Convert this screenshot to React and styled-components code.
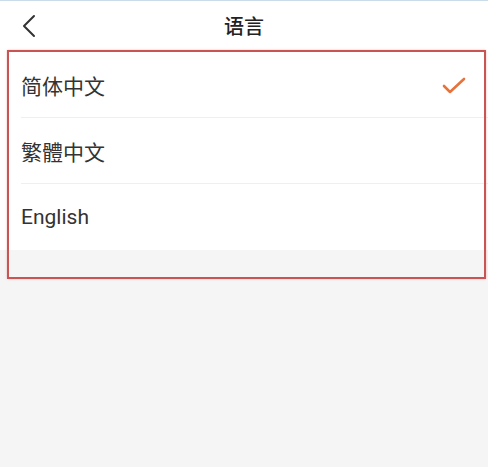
import React from "react";
import styled, { createGlobalStyle } from "styled-components";

const Global = createGlobalStyle`
  html, body { margin: 0; padding: 0; background: #f5f5f5; }
  body { font-family: Roboto, "Noto Sans CJK SC", "Noto Sans", sans-serif; }
`;

const Page = styled.div`
  position: relative;
  width: 488px;
  height: 467px;
  background: #f5f5f5;
  overflow: hidden;
`;

const Header = styled.header`
  height: 51px;
  border-top: 1px solid #c9dce8;
  background: #fff;
  display: grid;
  grid-template-columns: 60px 1fr 60px;
  align-items: center;
`;

const Back = styled.button`
  border: 0;
  background: none;
  padding: 0 0 0 22px;
  display: flex;
  align-items: center;
  height: 100%;
  margin-top: -2px;
`;

const Title = styled.h1`
  margin: 0;
  text-align: center;
  font-size: 20px;
  font-weight: 500;
  color: #222;
  margin-top: -2px;
`;

const List = styled.ul`
  list-style: none;
  margin: 0;
  padding: 0;
  background: #fff;
`;

const Row = styled.li`
  height: 66px;
  margin-left: 21px;
  padding-right: 22px;
  display: flex;
  align-items: center;
  justify-content: space-between;
  border-bottom: ${(p) => (p.$last ? "none" : "1px solid #efefef")};
  box-sizing: border-box;
  font-size: 21px;
  color: #333;
`;

const Annotation = styled.div`
  position: absolute;
  left: 7px;
  top: 50px;
  width: 479px;
  height: 229px;
  box-sizing: border-box;
  border: 2px solid #c95454;
  box-shadow: 0 0 2px rgba(230, 120, 120, 0.5);
  pointer-events: none;
`;

const Check = () => (
  <svg width="24" height="18" viewBox="0 0 24 18" style={{ marginTop: 2 }}>
    <polyline
      points="2,9 8,15 22,2"
      fill="none"
      stroke="#e8733a"
      strokeWidth="2.6"
      strokeLinecap="round"
      strokeLinejoin="round"
    />
  </svg>
);

const langs = [
  { label: "简体中文", selected: true },
  { label: "繁體中文" },
  { label: "English" },
];

export default function App() {
  return (
    <Page>
      <Global />
      <Header>
        <Back aria-label="back">
          <svg width="14" height="24" viewBox="0 0 14 24">
            <polyline
              points="12,2 2,12 12,22"
              fill="none"
              stroke="#333"
              strokeWidth="2"
              strokeLinecap="round"
              strokeLinejoin="round"
            />
          </svg>
        </Back>
        <Title>语言</Title>
        <div />
      </Header>
      <List>
        {langs.map((l, i) => (
          <Row key={l.label} $last={i === langs.length - 1}>
            <span>{l.label}</span>
            {l.selected && <Check />}
          </Row>
        ))}
      </List>
      <Annotation />
    </Page>
  );
}
